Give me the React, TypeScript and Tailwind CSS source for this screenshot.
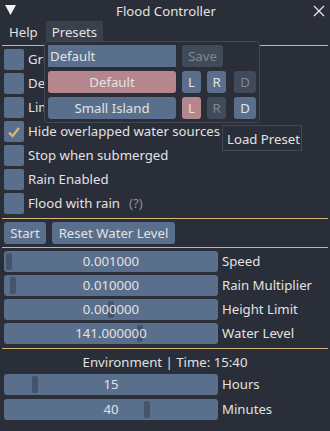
import React from "react";

const frame = "bg-[#5a6f8c]";
const grab = "bg-[#44546a]";

const Sep = () => <div className="h-px bg-[#d4b474] mx-[-2px]" />;

const Check = ({ label, checked, hint }: { label: string; checked?: boolean; hint?: boolean }) => (
    <div className="flex items-center h-[21px] gap-[4px]">
        <div className={`w-[20px] h-[21px] rounded-[2px] ${frame} flex items-center justify-center`}>
            {checked && (
                <svg width="14" height="12" viewBox="0 0 14 12">
                    <path d="M2 6.5 L5.5 10 L12 2" stroke="#d9b779" strokeWidth="2.2" fill="none" />
                </svg>
            )}
        </div>
        <span className="whitespace-nowrap pt-px">{label}</span>
        {hint && <span className="text-[#8a909a] ml-[5px] pt-px">(?)</span>}
    </div>
);

const Slider = ({ value, label, pos }: { value: string; label: string; pos: number }) => (
    <div className="flex items-center h-[21px] gap-[4px]">
        <div className={`relative w-[214px] h-[21px] rounded-[3px] ${frame} flex items-center justify-center`}>
            <div className={`absolute top-[2px] bottom-[2px] w-[6px] rounded-[2px] ${grab}`} style={{ left: pos }} />
            <span className="relative pt-px">{value}</span>
        </div>
        <span className="whitespace-nowrap pt-px">{label}</span>
    </div>
);

const Btn = ({ children, className }: { children: React.ReactNode; className: string }) => (
    <div className={`h-[22px] rounded-[3px] flex items-center justify-center pt-px ${className}`}>{children}</div>
);

export default function App() {
    return (
        <div
            className="relative w-[330px] h-[431px] overflow-hidden bg-[#2a2e39] text-[#e2e2e2] text-[13.2px] leading-none"
            style={{ fontFamily: '"Noto Sans", sans-serif' }}
        >
            {/* title bar */}
            <div className="relative h-[21px] flex items-center justify-center">
                <svg className="absolute left-[5px] top-[5px]" width="11" height="10" viewBox="0 0 11 10">
                    <path d="M0 0 H11 L5.5 10 Z" fill="#f0f0f0" />
                </svg>
                <span className="pl-[2px] pt-[2px]">Flood Controller</span>
                <svg className="absolute right-[5px] top-[5px]" width="12" height="12" viewBox="0 0 12 12">
                    <path d="M1 1 L11 11 M11 1 L1 11" stroke="#e6e6e6" strokeWidth="1.3" />
                </svg>
            </div>
            {/* menu bar */}
            <div className="flex h-[20px] items-center">
                <span className="pl-[9px] pr-[8px] pt-[3px]">Help</span>
                <span className="h-full flex items-center px-[6px] pt-[3px] bg-[#3a3f4c]">Presets</span>
            </div>

            <div className="flex flex-col px-[4px] pt-[4px]">
                <Sep />
                <div className="flex flex-col gap-[3px] mt-[3px]">
                    <Check label="Grid" />
                    <Check label="Debug" />
                    <Check label="Limit" />
                    <Check label="Hide overlapped water sources" checked />
                    <Check label="Stop when submerged" />
                    <Check label="Rain Enabled" />
                    <Check label="Flood with rain" hint />
                </div>
                <div className="mt-[4px]">
                    <Sep />
                </div>
                <div className="flex gap-[6px] mt-[3px]">
                    <Btn className={`${frame} w-[42px]`}>Start</Btn>
                    <Btn className={`${frame} w-[123px]`}>Reset Water Level</Btn>
                </div>
                <div className="mt-[3px]">
                    <Sep />
                </div>
                <div className="flex flex-col gap-[3px] mt-[3px]">
                    <Slider value="0.001000" label="Speed" pos={2} />
                    <Slider value="0.010000" label="Rain Multiplier" pos={6} />
                    <Slider value="0.000000" label="Height Limit" pos={104} />
                    <Slider value="141.000000" label="Water Level" pos={133} />
                </div>
                <div className="mt-[4px]">
                    <Sep />
                </div>
                <div className="h-[24px] flex items-center justify-center pt-[3px]">Environment | Time: 15:40</div>
                <div className="flex flex-col gap-[4px] mt-[1px]">
                    <Slider value="15" label="Hours" pos={28} />
                    <Slider value="40" label="Minutes" pos={140} />
                </div>
            </div>

            {/* presets popup */}
            <div className="absolute left-[44px] top-[41px] w-[216px] h-[82px] rounded-[4px] border border-[#434854] bg-[#2a2e39] p-[3px] flex flex-col gap-[4px]">
                <div className="flex gap-[6px]">
                    <div className={`h-[22px] w-[128px] ${frame} flex items-center pl-[2px] pt-px`}>Default</div>
                    <Btn className="w-[41px] bg-[#414a59] text-[#80868f]">Save</Btn>
                </div>
                <div className="flex">
                    <Btn className="w-[128px] bg-[#b5878d]">Default</Btn>
                    <Btn className={`ml-[6px] w-[19px] ${frame}`}>L</Btn>
                    <Btn className={`ml-[6px] w-[19px] ${frame}`}>R</Btn>
                    <Btn className="ml-[8px] w-[22px] bg-[#414a59] text-[#80868f]">D</Btn>
                </div>
                <div className="flex">
                    <Btn className={`w-[128px] ${frame}`}>Small Island</Btn>
                    <Btn className="ml-[6px] w-[19px] bg-[#b5878d]">L</Btn>
                    <Btn className="ml-[6px] w-[19px] bg-[#414a59] text-[#80868f]">R</Btn>
                    <Btn className={`ml-[8px] w-[22px] ${frame}`}>D</Btn>
                </div>
            </div>

            {/* tooltip */}
            <div className="absolute left-[222px] top-[125px] w-[80px] h-[26px] border border-[#434854] bg-[#2a2e39] flex items-center pl-[4px] pt-[3px] whitespace-nowrap">
                Load Preset
            </div>
        </div>
    );
}
